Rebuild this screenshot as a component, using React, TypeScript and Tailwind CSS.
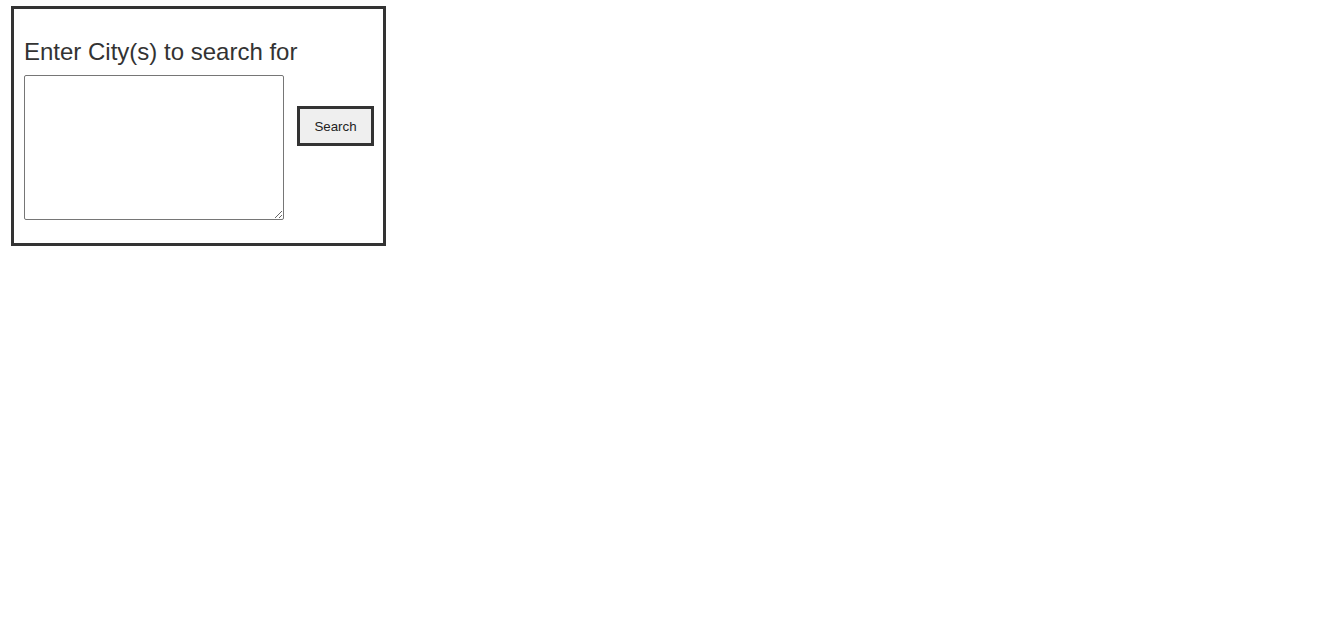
import React from "react";

export default function App() {
  return (
    <div className="min-h-[623px] w-full bg-white" style={{ fontFamily: '"Liberation Sans", Arial, sans-serif' }}>
      <div className="ml-[11px] pt-[6px]">
        <div className="box-border h-[240px] w-[375px] border-[3px] border-[#333333] pl-[10px] pr-[9px] pt-[29px]">
          <div className="h-[28px] text-[24px] leading-[28px] text-[#333333]">Enter City(s) to search for</div>
          <div className="mt-[9px] flex items-start">
            <textarea
              className="box-border h-[145px] w-[260px] resize rounded-[2px] border border-[#767676] bg-white p-[2px] text-[13px]"
            />
            <button className="ml-[13px] mt-[31px] box-border h-[40px] w-[77px] border-[3px] border-[#333333] bg-[#efefef] pt-[1px] text-[13.33px] text-[#222222]">
              Search
            </button>
          </div>
        </div>
      </div>
    </div>
  );
}
